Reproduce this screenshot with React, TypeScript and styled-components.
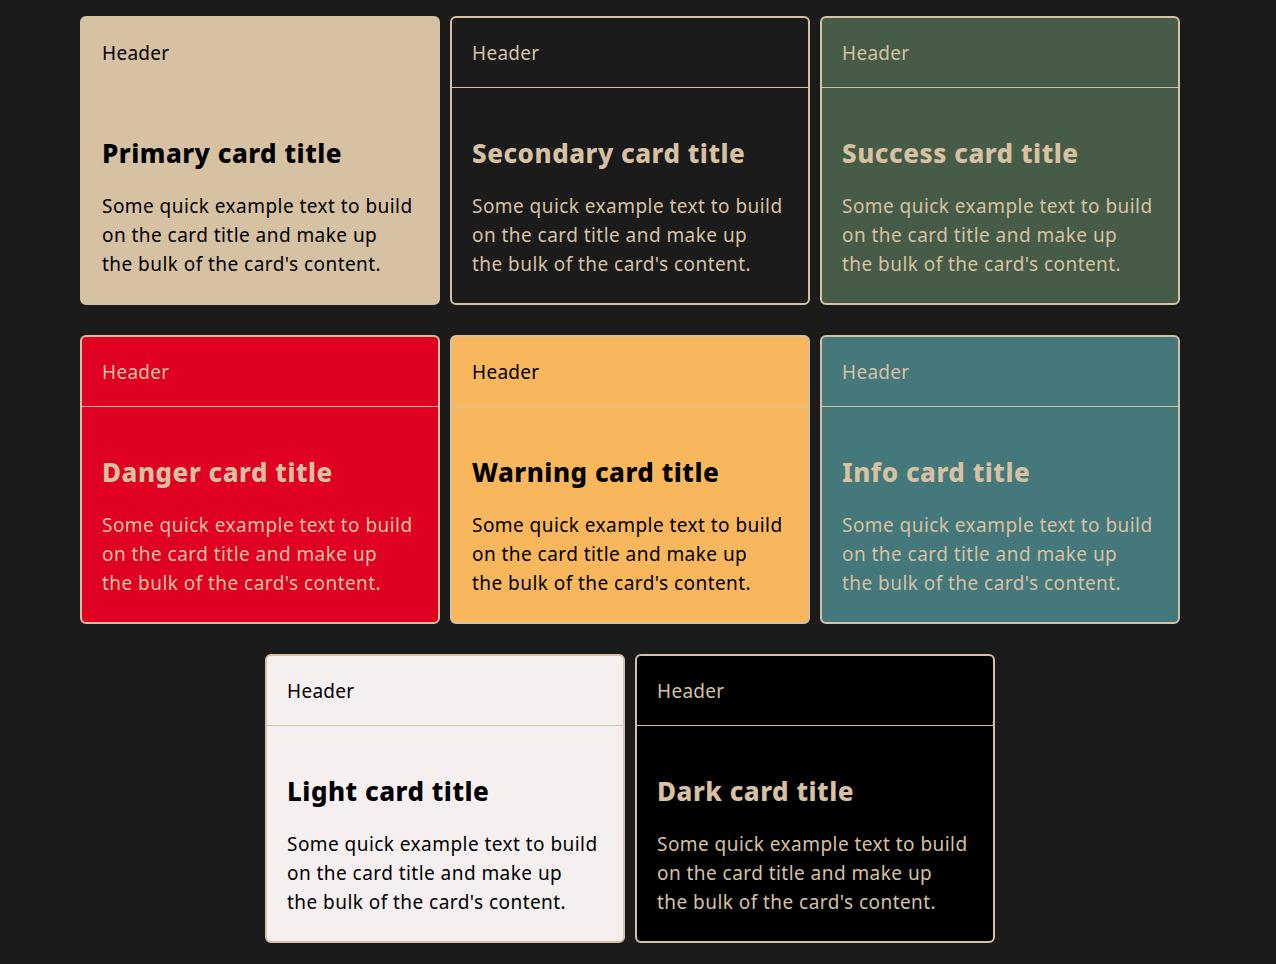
import styled, { createGlobalStyle } from "styled-components";

const tan = "#d6c1a2";

const GlobalStyle = createGlobalStyle`
  body {
    margin: 0;
    background: #1b1b1b;
    font-family: "Noto Sans", "Noto Sans CJK JP", sans-serif;
  }
`;

interface IVariant {
  bg: string;
  fg: string;
}

const variants: Record<string, IVariant> = {
  primary: { bg: tan, fg: "#000000" },
  secondary: { bg: "#1b1b1b", fg: tan },
  success: { bg: "#465c48", fg: tan },
  danger: { bg: "#e00022", fg: tan },
  warning: { bg: "#f8b75c", fg: "#000000" },
  info: { bg: "#44787a", fg: tan },
  light: { bg: "#f6eff0", fg: "#000000" },
  dark: { bg: "#000000", fg: tan },
};

const Grid = styled.div`
  display: flex;
  flex-wrap: wrap;
  justify-content: center;
  column-gap: 10px;
  row-gap: 30px;
  width: 1100px;
  margin: 0 0 0 80px;
  padding: 16px 0 20px;
`;

const Card = styled.div<{ $bg: string; $fg: string }>`
  box-sizing: border-box;
  width: 360px;
  border: 2px solid ${tan};
  border-radius: 6px;
  background: ${(p) => p.$bg};
  color: ${(p) => p.$fg};
  overflow: hidden;
`;

const Header = styled.div`
  padding: 21px 20px 19px;
  font-size: 19px;
  line-height: 29px;
  letter-spacing: 0.3px;
  border-bottom: 1px solid ${tan};
`;

const Body = styled.div`
  padding: 49px 20px 24px;
`;

const Title = styled.h5`
  margin: 0 0 23px;
  font-size: 26px;
  line-height: 32px;
  font-weight: 800;
  letter-spacing: 0.5px;
`;

const Text = styled.p`
  margin: 0;
  font-size: 19px;
  line-height: 29px;
  letter-spacing: 0.45px;
`;

const Keep = styled.span`
  white-space: nowrap;
`;

const names = ["primary", "secondary", "success", "danger", "warning", "info", "light", "dark"];

export default function App() {
  return (
    <>
      <GlobalStyle />
      <Grid>
        {names.map((n) => (
          <Card key={n} $bg={variants[n].bg} $fg={variants[n].fg}>
            <Header>Header</Header>
            <Body>
              <Title>{n[0].toUpperCase() + n.slice(1)} card title</Title>
              <Text>
                Some quick example text to build on the card title and make up <Keep>the bulk</Keep> of the card's content.
              </Text>
            </Body>
          </Card>
        ))}
      </Grid>
    </>
  );
}
